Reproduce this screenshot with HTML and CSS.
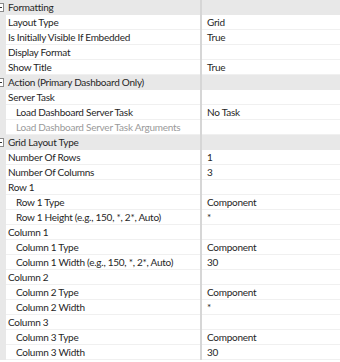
FILE: index.html
```html
<!DOCTYPE html>
<html lang="en">
<head>
    <meta charset="UTF-8">
    <meta name="viewport" content="width=device-width, initial-scale=1.0">
    <title>Properties</title>
    <link rel="stylesheet" href="styles.css">
</head>
<body>
    <main id="grid">
        <div class="row cat"><span class="gut"><svg class="exp" width="9" height="9" viewBox="0 0 9 9"><rect x="0.5" y="0.5" width="8" height="8" fill="#fff" stroke="#8a8a8a"/><path d="M2 4.5h5" stroke="#333"/></svg></span><span class="name">Formatting</span><span class="split"></span><span class="val"></span></div>
        <div class="row"><span class="gut"></span><span class="name">Layout Type</span><span class="split"></span><span class="val">Grid</span></div>
        <div class="row"><span class="gut"></span><span class="name">Is Initially Visible If Embedded</span><span class="split"></span><span class="val">True</span></div>
        <div class="row"><span class="gut"></span><span class="name">Display Format</span><span class="split"></span><span class="val"></span></div>
        <div class="row"><span class="gut"></span><span class="name">Show Title</span><span class="split"></span><span class="val">True</span></div>

        <div class="row cat"><span class="gut"><svg class="exp" width="9" height="9" viewBox="0 0 9 9"><rect x="0.5" y="0.5" width="8" height="8" fill="#fff" stroke="#8a8a8a"/><path d="M2 4.5h5" stroke="#333"/></svg></span><span class="name">Action (Primary Dashboard Only)</span><span class="split"></span><span class="val"></span></div>
        <div class="row"><span class="gut"></span><span class="name">Server Task</span><span class="split"></span><span class="val"></span></div>
        <div class="row"><span class="gut"></span><span class="name sub">Load Dashboard Server Task</span><span class="split"></span><span class="val">No Task</span></div>
        <div class="row"><span class="gut"></span><span class="name sub off">Load Dashboard Server Task Arguments</span><span class="split"></span><span class="val"></span></div>

        <div class="row cat"><span class="gut"><svg class="exp" width="9" height="9" viewBox="0 0 9 9"><rect x="0.5" y="0.5" width="8" height="8" fill="#fff" stroke="#8a8a8a"/><path d="M2 4.5h5" stroke="#333"/></svg></span><span class="name">Grid Layout Type</span><span class="split"></span><span class="val"></span></div>
        <div class="row"><span class="gut"></span><span class="name">Number Of Rows</span><span class="split"></span><span class="val">1</span></div>
        <div class="row"><span class="gut"></span><span class="name">Number Of Columns</span><span class="split"></span><span class="val">3</span></div>
        <div class="row"><span class="gut"></span><span class="name">Row 1</span><span class="split"></span><span class="val"></span></div>
        <div class="row"><span class="gut"></span><span class="name sub">Row 1 Type</span><span class="split"></span><span class="val">Component</span></div>
        <div class="row"><span class="gut"></span><span class="name sub">Row 1 Height (e.g., 150, *, 2*, Auto)</span><span class="split"></span><span class="val">*</span></div>
        <div class="row"><span class="gut"></span><span class="name">Column 1</span><span class="split"></span><span class="val"></span></div>
        <div class="row"><span class="gut"></span><span class="name sub">Column 1 Type</span><span class="split"></span><span class="val">Component</span></div>
        <div class="row"><span class="gut"></span><span class="name sub">Column 1 Width (e.g., 150, *, 2*, Auto)</span><span class="split"></span><span class="val">30</span></div>
        <div class="row"><span class="gut"></span><span class="name">Column 2</span><span class="split"></span><span class="val"></span></div>
        <div class="row"><span class="gut"></span><span class="name sub">Column 2 Type</span><span class="split"></span><span class="val">Component</span></div>
        <div class="row"><span class="gut"></span><span class="name sub">Column 2 Width</span><span class="split"></span><span class="val">*</span></div>
        <div class="row"><span class="gut"></span><span class="name">Column 3</span><span class="split"></span><span class="val"></span></div>
        <div class="row"><span class="gut"></span><span class="name sub">Column 3 Type</span><span class="split"></span><span class="val">Component</span></div>
        <div class="row"><span class="gut"></span><span class="name sub">Column 3 Width</span><span class="split"></span><span class="val">30</span></div>
    </main>
</body>
</html>
```
FILE: styles.css
```css
body{
    margin: 0;
    padding: 0;
    background-color: #ffffff;
}

#grid{
    width: 340px;
    display: flex;
    flex-direction: column;
    font-family: Lato, sans-serif;
    font-size: 10px;
    letter-spacing: -0.25px;
    color: #262626;
}

.row{
    height: 15px;
    display: grid;
    grid-template-columns: 6px 194px 2px 1fr;
}

.row > span{
    height: 15px;
    line-height: 14px;
    white-space: nowrap;
    overflow: hidden;
    box-sizing: border-box;
}

.gut{
    background-color: #e8e8e8;
    display: flex;
    align-items: center;
}

.exp{
    margin-left: -5px;
    margin-top: -1px;
    flex-shrink: 0;
}

.name{
    padding-left: 2px;
    border-bottom: 1px solid #f0f0f0;
}

.sub{
    padding-left: 10px;
}

.off{
    color: #9a9a9a;
}

.split{
    background-color: #d6d6d6;
}

.val{
    padding-left: 5px;
    border-bottom: 1px solid #f0f0f0;
}

.cat .name,
.cat .val{
    background-color: #e8e8e8;
    border-bottom: 0;
}
```
